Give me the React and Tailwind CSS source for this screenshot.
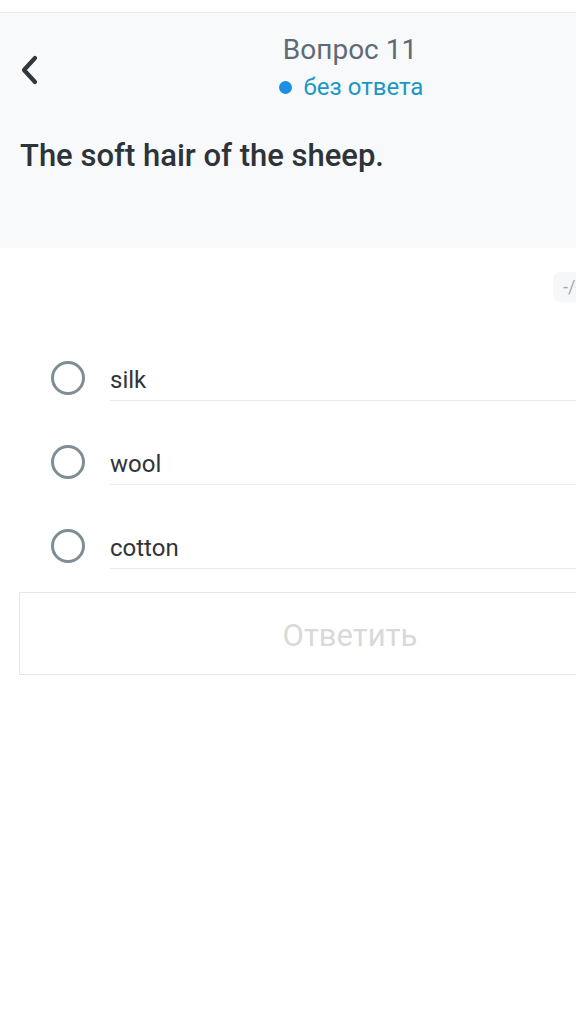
import React from "react";

const options = ["silk", "wool", "cotton"];

export default function App() {
  return (
    <div className="w-[576px] h-[1027px] overflow-hidden bg-white" style={{ fontFamily: "Roboto, 'Noto Sans', sans-serif" }}>
      <div className="w-[700px]">
        <div className="h-[13px] bg-white border-b border-[#e9ecef]"></div>
        <div className="bg-[#f7f9fb] h-[235px] relative">
          <div className="flex flex-col items-center pt-[21px]">
            <div className="text-[28px] leading-[32px] text-[#5e6b74]">Вопрос 11</div>
            <div className="flex items-center gap-[12px] mt-[7px] ml-[2px]">
              <span className="w-[13px] h-[13px] rounded-full bg-[#1a8fe3]"></span>
              <span className="text-[24px] leading-[28px] text-[#1c97c4]">без ответа</span>
            </div>
          </div>
          <div className="absolute left-[18px] top-[42px]">
            <svg width="24" height="30" viewBox="0 0 24 30">
              <path d="M17 3 L6 15 L17 27" fill="none" stroke="#30363b" strokeWidth="4.2" strokeLinecap="round" strokeLinejoin="round" />
            </svg>
          </div>
          <div className="px-[20px] pt-[37px] text-[31px] leading-[36px] font-medium text-[#2d3338]">
            The soft hair of the sheep.
          </div>
        </div>
        <div className="flex pl-[553px] pt-[24px] h-[88px]">
          <div className="h-[30px] px-[10px] rounded-[8px] bg-[#f5f7f9] text-[18px] leading-[30px] text-[#a3acb2]">-/-</div>
        </div>
        <div className="flex flex-col">
          {options.map((o) => (
            <div key={o} className="flex items-center h-[84px] pl-[51px]">
              <div className="w-[34px] h-[34px] rounded-full border-[3px] border-[#7f8e95] shrink-0"></div>
              <div className="ml-[25px] flex-1 h-[42px] border-b border-[#ececec] flex items-center mt-[4px]">
                <span className="text-[24px] leading-[28px] text-[#2f3539]">{o}</span>
              </div>
            </div>
          ))}
        </div>
        <div className="mx-[19px] mt-[4px] h-[83px] border border-[#e6e6e6] flex items-center justify-center pt-[5px]">
          <span className="text-[31px] text-[#d9d9d9]">Ответить</span>
        </div>
      </div>
    </div>
  );
}
